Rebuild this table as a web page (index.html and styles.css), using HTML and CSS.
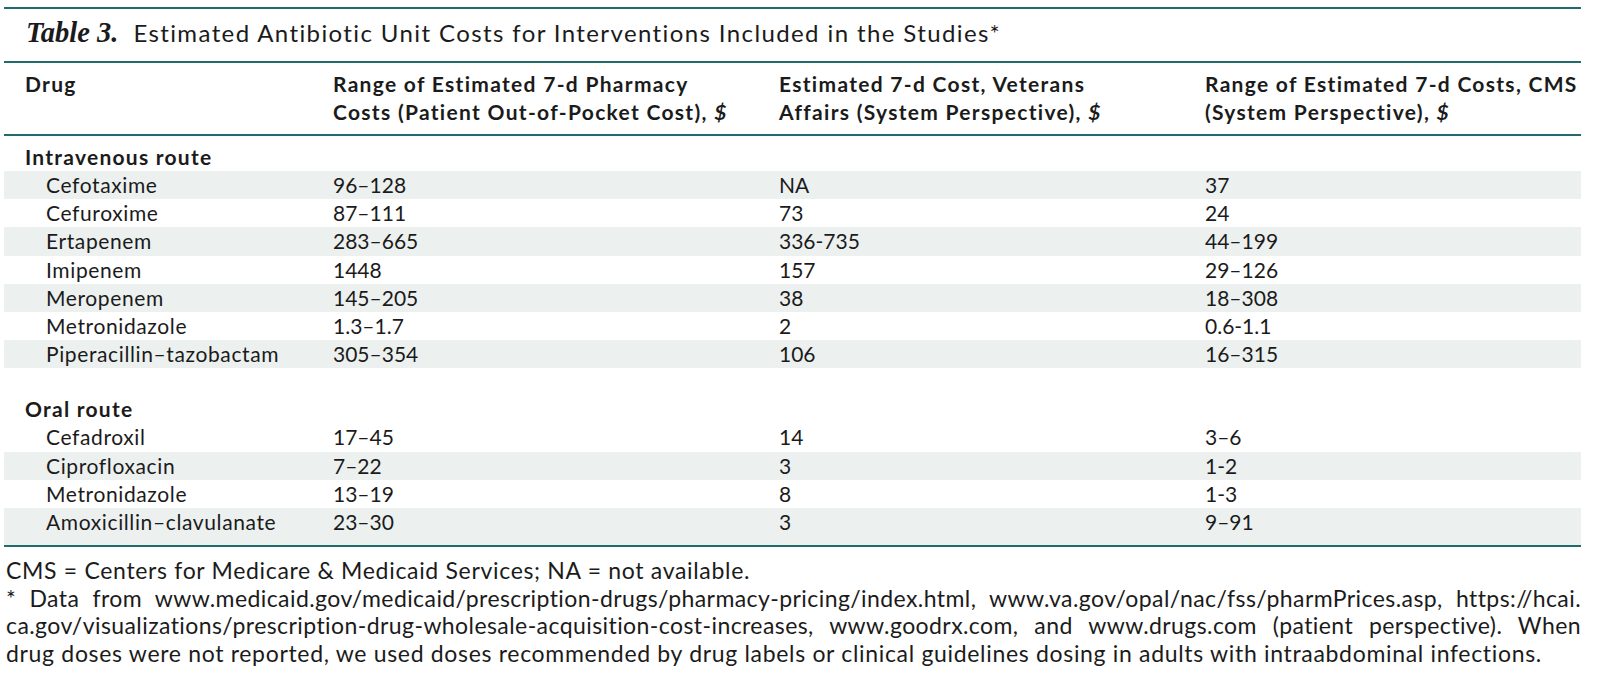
FILE: index.html
```html
<!DOCTYPE html>
<html lang="en">
<head>
<meta charset="utf-8">
<title>Table 3. Estimated Antibiotic Unit Costs</title>
<link rel="stylesheet" href="styles.css">
</head>
<body>
<div class="sheet">
  <div class="caption"><span class="label">Table 3.</span><span class="caption-text">Estimated Antibiotic Unit Costs for Interventions Included in the Studies*</span></div>

  <div class="thead row-grid">
    <div class="th th-first">Drug</div>
    <div class="th">Range of Estimated 7-d Pharmacy<br>Costs (Patient Out-of-Pocket Cost), <i>$</i></div>
    <div class="th">Estimated 7-d Cost, Veterans<br>Affairs (System Perspective), <i>$</i></div>
    <div class="th">Range of Estimated 7-d Costs, CMS<br>(System Perspective), <i>$</i></div>
  </div>

  <div class="tbody">
    <div class="section first-section">Intravenous route</div>
    <div class="row row-grid shade"><div class="drug">Cefotaxime</div><div>96–128</div><div>NA</div><div>37</div></div>
    <div class="row row-grid"><div class="drug">Cefuroxime</div><div>87–111</div><div>73</div><div>24</div></div>
    <div class="row row-grid shade"><div class="drug">Ertapenem</div><div>283–665</div><div>336-735</div><div>44–199</div></div>
    <div class="row row-grid"><div class="drug">Imipenem</div><div>1448</div><div>157</div><div>29–126</div></div>
    <div class="row row-grid shade"><div class="drug">Meropenem</div><div>145–205</div><div>38</div><div>18–308</div></div>
    <div class="row row-grid"><div class="drug">Metronidazole</div><div>1.3–1.7</div><div>2</div><div>0.6-1.1</div></div>
    <div class="row row-grid shade"><div class="drug">Piperacillin–tazobactam</div><div>305–354</div><div>106</div><div>16–315</div></div>

    <div class="section later-section">Oral route</div>
    <div class="row row-grid"><div class="drug">Cefadroxil</div><div>17–45</div><div>14</div><div>3–6</div></div>
    <div class="row row-grid shade"><div class="drug">Ciprofloxacin</div><div>7–22</div><div>3</div><div>1-2</div></div>
    <div class="row row-grid"><div class="drug">Metronidazole</div><div>13–19</div><div>8</div><div>1-3</div></div>
    <div class="row row-grid shade last"><div class="drug">Amoxicillin–clavulanate</div><div>23–30</div><div>3</div><div>9–91</div></div>
  </div>

  <div class="notes">
    <p class="note-line">CMS = Centers for Medicare &amp; Medicaid Services; NA = not available.</p>
    <p class="note-line justify">* Data from www.medicaid.gov/medicaid/prescription-drugs/pharmacy-pricing/index.html, www.va.gov/opal/nac/fss/pharmPrices.asp, https://hcai.</p>
    <p class="note-line justify">ca.gov/visualizations/prescription-drug-wholesale-acquisition-cost-increases, www.goodrx.com, and www.drugs.com (patient perspective). When</p>
    <p class="note-line">drug doses were not reported, we used doses recommended by drug labels or clinical guidelines dosing in adults with intraabdominal infections.</p>
  </div>
</div>
</body>
</html>
```

FILE: styles.css
```css
html, body {
  margin: 0;
  padding: 0;
  background: #ffffff;
}

body {
  font-family: Lato, "Open Sans", "Liberation Sans", sans-serif;
  color: #1b1b1b;
}

.sheet {
  width: 1577px;
  margin: 7px 0 0 4px;
}

.caption {
  border-top: 2px solid #1f6b6e;
  border-bottom: 2px solid #1f6b6e;
  padding: 9px 0 13px 22px;
  line-height: 30px;
  font-size: 24px;
  letter-spacing: 1.39px;
  white-space: nowrap;
}

.label {
  font-family: "Liberation Serif", "Times New Roman", serif;
  font-style: italic;
  font-weight: bold;
  font-size: 28.5px;
  letter-spacing: 0;
  margin-right: 15px;
}

.row-grid {
  display: grid;
  grid-template-columns: 329px 446px 426px 1fr;
}

.thead {
  border-bottom: 2px solid #1f6b6e;
  padding: 7px 0 8px;
  font-weight: bold;
  font-size: 21px;
  line-height: 28px;
  letter-spacing: 1.3px;
  white-space: nowrap;
}

.th-first {
  padding-left: 21px;
}

.tbody {
  border-bottom: 2px solid #1f6b6e;
  font-size: 21px;
  line-height: 28.2px;
  letter-spacing: 0;
}

.section {
  font-weight: bold;
  padding-left: 21px;
  letter-spacing: 1.25px;
  line-height: 28px;
}

.first-section {
  padding-top: 7px;
}

.later-section {
  padding-top: 27px;
}

.row {
  height: 28.2px;
  white-space: nowrap;
}

.row.last {
  height: auto;
  padding-bottom: 9px;
}

.shade {
  background: #ecf1f0;
}

.drug {
  padding-left: 42px;
  letter-spacing: 0.62px;
}

.notes {
  padding: 10px 0 0 2px;
  font-size: 23px;
  line-height: 27.7px;
  letter-spacing: 0.68px;
}

.note-line {
  margin: 0;
  white-space: nowrap;
}

.note-line.justify {
  white-space: normal;
  letter-spacing: 0.42px;
  text-align: justify;
  text-align-last: justify;
}
```
